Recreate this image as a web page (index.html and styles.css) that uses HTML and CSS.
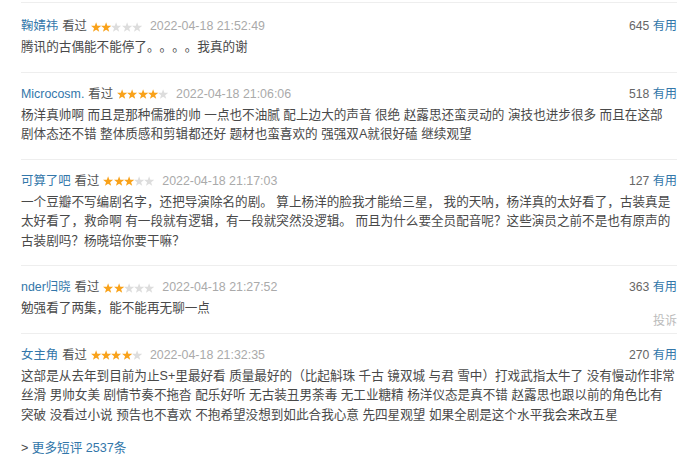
FILE: index.html
```html
<!DOCTYPE html>
<html lang="zh-CN">
    <head>
        <title>短评</title>
        <meta charset="UTF-8">
        <meta name="viewport" content="width=device-width, initial-scale=1.0">
        <link rel="stylesheet" href="styles.css">
    </head>
    <body>
        <svg class="sprite" xmlns="http://www.w3.org/2000/svg">
            <symbol id="star" viewBox="0 0 10 10">
                <polygon points="5,0.2 6.23,3.7 9.95,3.79 7,6.05 8.06,9.61 5,7.5 1.94,9.61 3,6.05 0.05,3.79 3.77,3.7"/>
            </symbol>
        </svg>

        <div class="comments">

            <div class="comment-item">
                <div class="comment-info">
                    <a class="user" href="#">鞠婧祎</a>
                    <span class="watched">看过</span>
                    <span class="rating">
                        <svg class="star on"><use href="#star"/></svg><svg class="star on"><use href="#star"/></svg><svg class="star"><use href="#star"/></svg><svg class="star"><use href="#star"/></svg><svg class="star"><use href="#star"/></svg>
                    </span>
                    <span class="time">2022-04-18 21:52:49</span>
                    <span class="votes"><span class="vote-count">645</span> <a href="#">有用</a></span>
                </div>
                <p class="short">腾讯的古偶能不能停了<span class="dot">。</span><span class="dot">。</span><span class="dot">。</span><span class="dot">。</span>我真的谢</p>
            </div>

            <div class="comment-item">
                <div class="comment-info">
                    <a class="user" href="#">Microcosm.</a>
                    <span class="watched">看过</span>
                    <span class="rating">
                        <svg class="star on"><use href="#star"/></svg><svg class="star on"><use href="#star"/></svg><svg class="star on"><use href="#star"/></svg><svg class="star on"><use href="#star"/></svg><svg class="star"><use href="#star"/></svg>
                    </span>
                    <span class="time">2022-04-18 21:06:06</span>
                    <span class="votes"><span class="vote-count">518</span> <a href="#">有用</a></span>
                </div>
                <p class="short">杨洋真帅啊 而且是那种儒雅的帅 一点也不油腻 配上边大的声音 很绝 赵露思还蛮灵动的 演技也进步很多 而且在这部<br>剧体态还不错 整体质感和剪辑都还好 题材也蛮喜欢的 强强双A就很好磕 继续观望</p>
            </div>

            <div class="comment-item">
                <div class="comment-info">
                    <a class="user" href="#">可算了吧</a>
                    <span class="watched">看过</span>
                    <span class="rating">
                        <svg class="star on"><use href="#star"/></svg><svg class="star on"><use href="#star"/></svg><svg class="star on"><use href="#star"/></svg><svg class="star"><use href="#star"/></svg><svg class="star"><use href="#star"/></svg>
                    </span>
                    <span class="time">2022-04-18 21:17:03</span>
                    <span class="votes"><span class="vote-count">127</span> <a href="#">有用</a></span>
                </div>
                <p class="short">一个豆瓣不写编剧名字，还把导演除名的剧。 算上杨洋的脸我才能给三星， 我的天呐，杨洋真的太好看了，古装真是<br>太好看了，救命啊 有一段就有逻辑，有一段就突然没逻辑。 而且为什么要全员配音呢？这些演员之前不是也有原声的<br>古装剧吗？杨晓培你要干嘛？</p>
            </div>

            <div class="comment-item">
                <div class="comment-info">
                    <a class="user" href="#">nder归晓</a>
                    <span class="watched">看过</span>
                    <span class="rating">
                        <svg class="star on"><use href="#star"/></svg><svg class="star on"><use href="#star"/></svg><svg class="star"><use href="#star"/></svg><svg class="star"><use href="#star"/></svg><svg class="star"><use href="#star"/></svg>
                    </span>
                    <span class="time">2022-04-18 21:27:52</span>
                    <span class="votes"><span class="vote-count">363</span> <a href="#">有用</a></span>
                </div>
                <p class="short">勉强看了两集，能不能再无聊一点</p>
                <a class="report" href="#">投诉</a>
            </div>

            <div class="comment-item last">
                <div class="comment-info">
                    <a class="user" href="#">女主角</a>
                    <span class="watched">看过</span>
                    <span class="rating">
                        <svg class="star on"><use href="#star"/></svg><svg class="star on"><use href="#star"/></svg><svg class="star on"><use href="#star"/></svg><svg class="star on"><use href="#star"/></svg><svg class="star"><use href="#star"/></svg>
                    </span>
                    <span class="time">2022-04-18 21:32:35</span>
                    <span class="votes"><span class="vote-count">270</span> <a href="#">有用</a></span>
                </div>
                <p class="short">这部是从去年到目前为止S+里最好看 质量最好的（比起斛珠 千古 镜双城 与君 雪中）打戏武指太牛了 没有慢动作非常<br>丝滑 男帅女美 剧情节奏不拖沓 配乐好听 无古装丑男荼毒 无工业糖精 杨洋仪态是真不错 赵露思也跟以前的角色比有<br>突破 没看过小说 预告也不喜欢 不抱希望没想到如此合我心意 先四星观望 如果全剧是这个水平我会来改五星</p>
            </div>

            <p class="more">&gt; <a href="#">更多短评 2537条</a></p>
        </div>
    </body>
</html>
```

FILE: styles.css
```css
body {
    margin: 0;
    background-color: white;
    color: #494949;
    font-family: "Liberation Sans", "Noto Sans CJK SC", sans-serif;
    font-size: 12.6px;
    line-height: 19.5px;
}
a {
    color: #3377aa;
    text-decoration: none;
}
.sprite {
    display: none;
}
.comments {
    width: 656px;
    margin: 2px 0 0 21px;
    padding-top: 2px;
    border-top: 1px solid #eeeeee;
}
.comment-item {
    position: relative;
    padding: 11px 0 14px;
    border-bottom: 1px solid #eeeeee;
}
.comment-item.last {
    border-bottom: none;
}
.comment-info {
    display: flex;
    align-items: center;
    gap: 4px;
    height: 22px;
    font-size: 12.4px;
}
.watched {
    color: #555555;
}
.rating {
    display: flex;
    align-items: center;
}
.star {
    width: 10.2px;
    height: 10.2px;
    fill: #dddddd;
}
.star.on {
    fill: #f9a21a;
}
.time {
    margin-left: 4px;
    color: #aaaaaa;
}
.votes {
    margin-left: auto;
    font-size: 12.2px;
}
.vote-count {
    color: #666666;
}
.short {
    margin: 0;
}
/* consecutive full stops get squeezed, keep each one full width */
.dot {
    display: inline-block;
    width: 1em;
}
.report {
    position: absolute;
    right: 0;
    bottom: 1px;
    color: #bbbbbb;
    font-size: 12px;
}
.more {
    margin: 1px 0 0;
    line-height: 16px;
}
```
